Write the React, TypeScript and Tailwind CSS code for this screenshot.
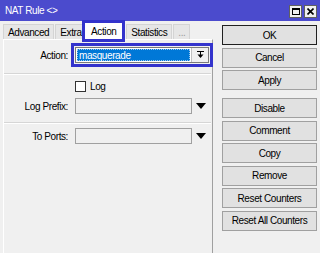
import { type ReactNode } from 'react';

const FONT = 'font-["Liberation_Sans",Arial,sans-serif] text-[10px] tracking-[-0.4px] text-black';

function Btn({ children, primary }: { children: ReactNode; primary?: boolean }) {
  return (
    <div
      className={
        'h-[20px] w-[95px] flex items-center justify-center bg-[#e1e1e1] border ' +
        (primary ? 'border-[#202020]' : 'border-[#a0a0a0]')
      }
    >
      {children}
    </div>
  );
}

function Tab({ children, active, dim, cut }: { children: ReactNode; active?: boolean; dim?: boolean; cut?: boolean }) {
  if (active) {
    return (
      <div className="h-[16px] w-[37px] -ml-[1px] mr-[3px] flex items-center justify-center bg-white outline-[3px] outline-solid outline-[#3333cc] relative z-10">
        {children}
      </div>
    );
  }
  return (
    <div
      className={
        'h-[15px] px-[4px] flex items-center bg-[#e6e6e6] border border-b-0 border-[#d4d4d4] overflow-hidden whitespace-nowrap ' +
        (dim ? 'text-[#9a9a9a] ' : '') +
        (cut ? 'w-[30px]' : '')
      }
    >
      {children}
    </div>
  );
}

function Field({ label, children }: { label: string; children: ReactNode }) {
  return (
    <div className="flex items-center">
      <div className="w-[65px] text-right pr-[1px]">{label}</div>
      <div className="ml-[6px] flex items-center">{children}</div>
    </div>
  );
}

function Input() {
  return (
    <div className="flex items-center">
      <div className="w-[117px] h-[16px] bg-[#f0f0f0] border border-[#a0a0a0]" />
      <svg width="10" height="6" viewBox="0 0 10 6" className="ml-[4px]">
        <path d="M0 0h10L5 6z" fill="#000" />
      </svg>
    </div>
  );
}

export default function App() {
  return (
    <div className={'w-[320px] h-[253px] bg-[#f0f0f0] overflow-hidden flex flex-col ' + FONT}>
      {/* Title bar */}
      <div className="h-[21px] bg-[#4b4bcd] flex items-center justify-between pl-[5px] pr-[3px] shrink-0">
        <span className="text-white">NAT Rule &lt;&gt;</span>
        <div className="flex gap-[2px] mt-[2px]">
          <div className="w-[13px] h-[13px] bg-[#f0f0f0] border border-[#606060] flex items-center justify-center">
            <div className="w-[8px] h-[7px] border border-black border-t-2" />
          </div>
          <div className="w-[13px] h-[13px] bg-[#f0f0f0] border border-[#606060] flex items-center justify-center">
            <svg width="7" height="7" viewBox="0 0 7 7">
              <path d="M0.5 0.5l6 6M6.5 0.5l-6 6" stroke="#000" strokeWidth="1.6" />
            </svg>
          </div>
        </div>
      </div>

      <div className="flex flex-1">
        {/* Left: tabs + panel */}
        <div className="w-[213px] flex flex-col">
          <div className="h-[18px] flex items-end pl-[3px] gap-[1px]">
            <Tab>Advanced</Tab>
            <Tab cut>Extra</Tab>
            <Tab active>Action</Tab>
            <Tab>Statistics</Tab>
            <Tab dim>...</Tab>
          </div>
          <div className="flex-1 ml-[3px] border-l border-t border-r border-l-white border-t-white border-r-[#a0a0a0] pt-[7px]">
            <Field label="Action:">
              <div className="w-[134px] h-[16px] bg-white border border-[#7a7a7a] flex items-center outline-[3px] outline-solid outline-[#3333cc] outline-offset-[1px]">
                <div className="flex-1 h-full p-[1px]">
                  <div className="h-full bg-[#0078d7] text-white flex items-center pl-[1px] border border-dotted border-[#9ac8f0]">
                    masquerade
                  </div>
                </div>
                <div className="w-[17px] h-full bg-[#f0f0f0] border-l border-[#c0c0c0] flex items-center justify-center">
                  <svg width="7" height="8" viewBox="0 0 7 8">
                    <path d="M0 0.5h7M3.5 1v3" stroke="#000" strokeWidth="1" />
                    <path d="M0.5 3.5h6L3.5 7z" fill="#000" />
                  </svg>
                </div>
              </div>
            </Field>

            <div className="h-[2px] border-t border-[#d6d6d6] border-b-white border-b mt-[10px] mr-[1px]" />

            <div className="flex items-center mt-[4px] ml-[71px]">
              <div className="w-[11px] h-[11px] bg-white border border-[#333]" />
              <span className="ml-[4px]">Log</span>
            </div>

            <div className="mt-[4px]">
              <Field label="Log Prefix:">
                <Input />
              </Field>
            </div>

            <div className="h-[2px] border-t border-[#d6d6d6] border-b-white border-b mt-[8px] mr-[1px]" />

            <div className="mt-[4px]">
              <Field label="To Ports:">
                <Input />
              </Field>
            </div>
          </div>
        </div>

        {/* Right: buttons */}
        <div className="flex-1 pl-[9px] pt-[4px] flex flex-col">
          <div className="flex flex-col gap-[2.5px]">
            <Btn primary>OK</Btn>
            <Btn>Cancel</Btn>
            <Btn>Apply</Btn>
          </div>
          <div className="flex flex-col gap-[2.5px] mt-[8px]">
            <Btn>Disable</Btn>
            <Btn>Comment</Btn>
            <Btn>Copy</Btn>
            <Btn>Remove</Btn>
            <Btn>Reset Counters</Btn>
            <Btn>Reset All Counters</Btn>
          </div>
        </div>
      </div>
    </div>
  );
}
